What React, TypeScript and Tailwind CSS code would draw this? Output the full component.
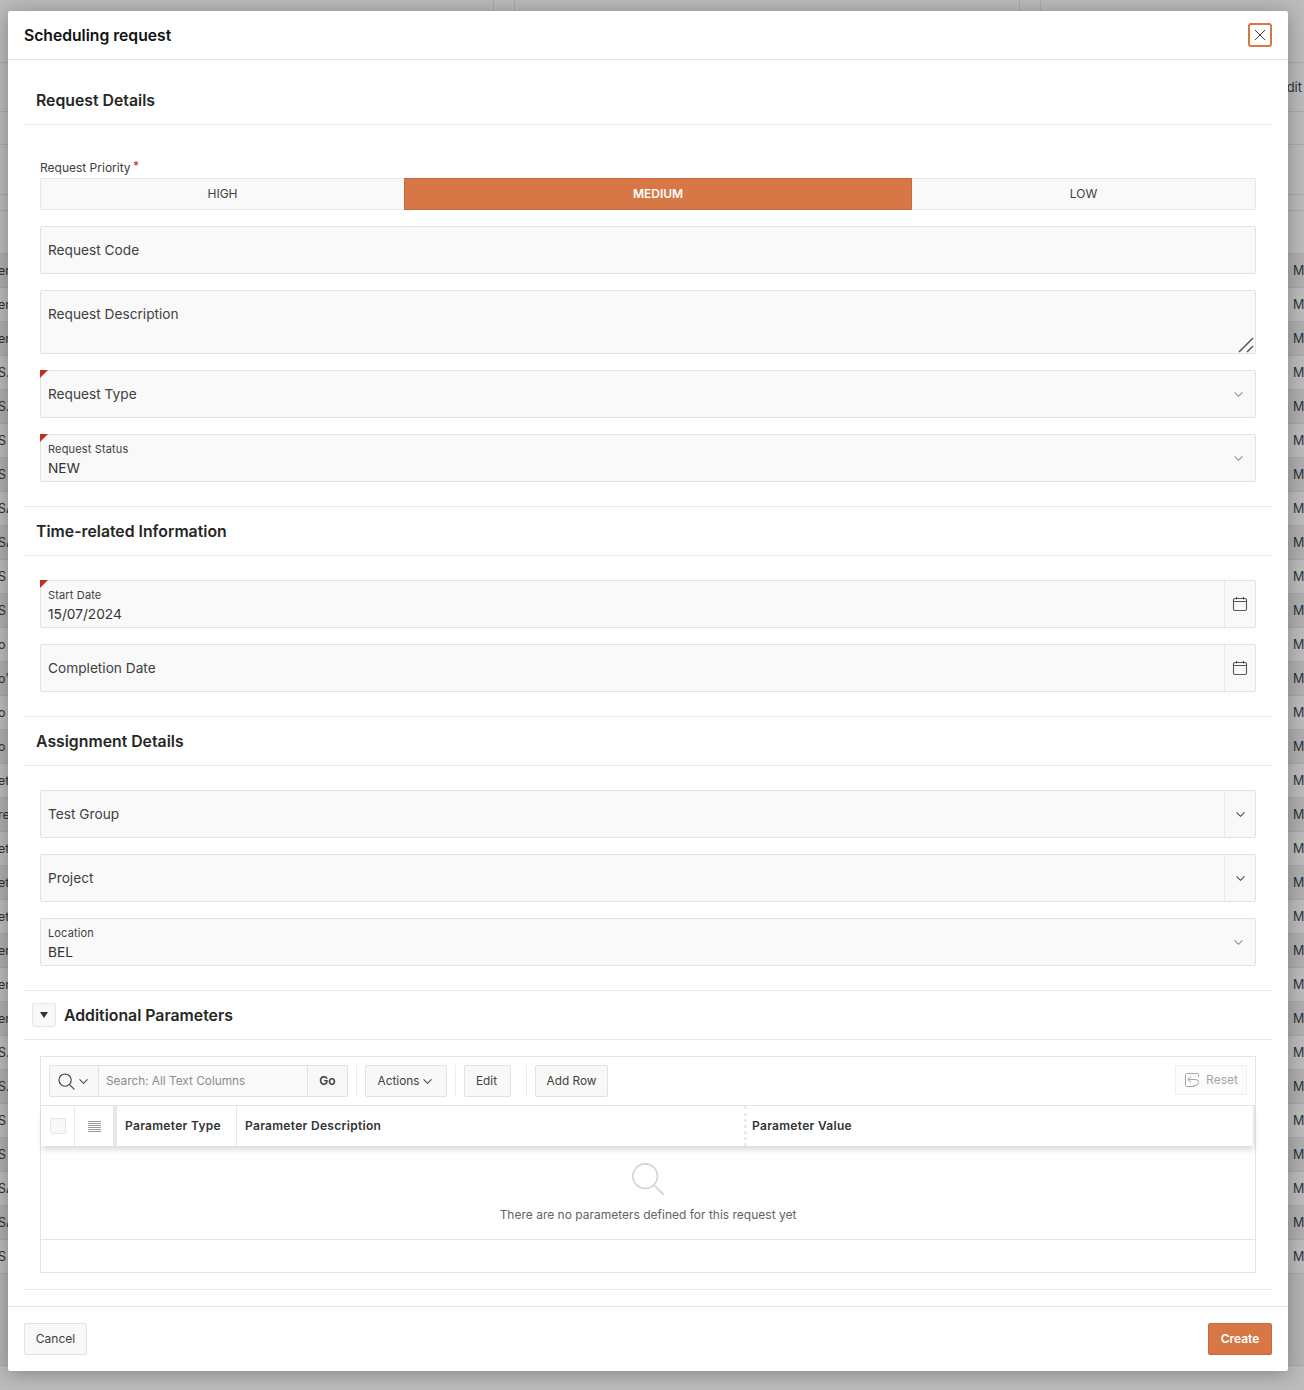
import React from 'react';

const leftCells = ['er', 'er', 'er', 'S.', 'S.', 'S', 'S', 'SA', 'SA', 'S', 'S', 'o', "o'", 'o', 'o', 'et', 're', 'et', 'et', 'et', 'er', 'er', 'er', 'S.', 'S.', 'S', 'S', 'SA', 'SA', 'S'];

const ChevronDown: React.FC<{ className?: string }> = ({ className }) => (
  <svg viewBox="0 0 12 8" fill="none" stroke="currentColor" strokeWidth="1.2" className={className}>
    <path d="M1.5 1.5 6 6l4.5-4.5" />
  </svg>
);

const CalendarIcon = () => (
  <svg viewBox="0 0 16 16" fill="none" stroke="#555555" strokeWidth="1.1" className="w-[16px] h-[16px]">
    <rect x="1.5" y="2.5" width="13" height="12" rx="1.5" />
    <path d="M1.5 5.5h13M4.5 1v2.5M11.5 1v2.5" />
  </svg>
);

const SearchIcon: React.FC<{ className?: string; strokeWidth?: number }> = ({ className, strokeWidth = 1.2 }) => (
  <svg viewBox="0 0 18 18" fill="none" stroke="currentColor" strokeWidth={strokeWidth} className={className}>
    <circle cx="7.5" cy="7.5" r="6.5" />
    <path d="m12.3 12.3 5 5" />
  </svg>
);

const RequiredMark = () => (
  <span className="absolute left-[-1px] top-[-1px] w-0 h-0 border-t-[8px] border-r-[8px] border-t-[#c52f1b] border-r-transparent" />
);

interface FieldProps {
  label: string;
  value?: string;
  required?: boolean;
  height?: string;
  trailing?: 'select' | 'calendar' | 'popup';
  resize?: boolean;
}

const Field: React.FC<FieldProps> = ({ label, value, required, height = 'h-[48px]', trailing, resize }) => (
  <div className={`relative flex ${height} bg-[#f9f9f9] border border-[#e2e2e2] rounded-[2px]`}>
    {required && <RequiredMark />}
    <div className={`flex-1 px-[7px] ${resize ? 'pt-[13px]' : value ? 'pt-[6px]' : 'flex items-center'}`}>
      {value ? (
        <>
          <div className="text-[11px] leading-[16px] tracking-[0.15px] text-[#404040]">{label}</div>
          <div className="mt-[1px] text-[13.7px] leading-[20px] text-[#333333]">{value}</div>
        </>
      ) : (
        <div className="text-[13.7px] leading-[20px] text-[#404040]">{label}</div>
      )}
    </div>
    {trailing === 'select' && (
      <div className="flex items-center pr-[11px]">
        <ChevronDown className="w-[11px] h-[7px] text-[#8c8c8c]" />
      </div>
    )}
    {trailing === 'calendar' && (
      <div className="flex items-center justify-center w-[31px] border-l border-[#e8e8e8]">
        <CalendarIcon />
      </div>
    )}
    {trailing === 'popup' && (
      <div className="flex items-center justify-center w-[31px] border-l border-[#e8e8e8]">
        <ChevronDown className="w-[11px] h-[7px] text-[#404040]" />
      </div>
    )}
    {resize && (
      <svg viewBox="0 0 16 16" stroke="#555555" strokeWidth="1.5" className="absolute right-[1px] bottom-0 w-[16px] h-[16px]">
        <path d="M1 15 15 1M9 15l6-6" />
      </svg>
    )}
  </div>
);

const SectionHeader: React.FC<{ title: string; children?: React.ReactNode }> = ({ title, children }) => (
  <div className="flex items-center h-[49px] border-b border-[#e8e8e8] pl-[8px]">
    {children}
    <h2 className={`pt-[2px] text-[15.8px] leading-[24px] font-semibold text-[#262626] ${children ? '' : 'pl-[4px]'}`}>{title}</h2>
  </div>
);

const ToolbarButton: React.FC<{ children: React.ReactNode; className?: string }> = ({ children, className = '' }) => (
  <button
    type="button"
    className={`flex items-center justify-center h-[32px] pt-[1px] bg-[#f8f8f8] border border-[#e2e2e2] rounded-[2px] text-[11.8px] text-[#404040] ${className}`}
  >
    {children}
  </button>
);

const ToolbarDivider = () => <div className="w-px h-[32px] bg-[#ededed]" />;

const ParametersGrid = () => (
  <div className="border border-[#e4e4e4]">
    <div className="flex items-center h-[49px] pl-[8px] pr-[8px] border-b border-[#e4e4e4]">
      <div className="flex h-[32px] w-[299px] bg-[#f8f8f8] border border-[#e2e2e2] rounded-[2px]">
        <div className="flex items-center gap-[3px] w-[49px] pl-[8px] border-r border-[#e2e2e2] text-[#404040]">
          <SearchIcon className="w-[17px] h-[17px]" />
          <ChevronDown className="w-[11px] h-[7px]" />
        </div>
        <div className="flex-1 flex items-center px-[7px] pt-[1px] bg-[#fafafa] text-[11.8px] text-[#8c8c8c]">Search: All Text Columns</div>
        <div className="flex items-center justify-center w-[40px] border-l border-[#e2e2e2] text-[12px] font-semibold text-[#404040]">Go</div>
      </div>
      <div className="ml-[8px] mr-[8px]"><ToolbarDivider /></div>
      <ToolbarButton className="w-[82px] gap-[3px] pr-[1px]">
        Actions
        <ChevronDown className="w-[11px] h-[7px]" />
      </ToolbarButton>
      <div className="ml-[8px] mr-[8px]"><ToolbarDivider /></div>
      <ToolbarButton className="w-[47px] pr-[2px]">Edit</ToolbarButton>
      <div className="ml-[15px] mr-[8px]"><ToolbarDivider /></div>
      <ToolbarButton className="w-[73px]">Add Row</ToolbarButton>
      <div className="ml-auto flex items-center justify-center gap-[6px] w-[72px] h-[30px] mt-[-2px] bg-[#fcfcfc] border border-[#f0f0f0] rounded-[2px] text-[12px] text-[#a6a6a6]">
        <svg viewBox="0 0 16 16" fill="none" stroke="#a6a6a6" strokeWidth="1" className="w-[16px] h-[16px]">
          <path d="M14.5 5V2.5a1 1 0 0 0-1-1h-11a1 1 0 0 0-1 1v11a1 1 0 0 0 1 1h8" />
          <path d="M7 4.5 3.8 7.5 7 10.5M4 7.5h7.5a2.8 2.8 0 0 1 0 6H9.5" />
        </svg>
        Reset
      </div>
    </div>
    <div className="flex h-[40px] border-r-2 border-[#e8e8e8] shadow-[0_5px_6px_-1px_rgba(0,0,0,0.14)] relative text-[12px] font-semibold tracking-[0.3px] text-[#333333]">
      <div className="flex items-center justify-center w-[34px] border-r border-[#e8e8e8]">
        <div className="w-[16px] h-[16px] bg-[#f8f8f8] border border-[#e6e6e6] rounded-[2px]" />
      </div>
      <div className="flex items-center justify-center w-[42px] border-r-4 border-[#e8e8e8]">
        <svg viewBox="0 0 13 11" stroke="#999999" strokeWidth="1" className="w-[13px] h-[11px]">
          <path d="M0 .5h13M0 2.5h13M0 4.5h13M0 6.5h13M0 8.5h13M0 10.5h13" />
        </svg>
      </div>
      <div className="flex items-center w-[120px] px-[8px] border-r border-[#e8e8e8]">Parameter Type</div>
      <div className="flex items-center w-[510px] px-[8px] border-r-[3px] border-dotted border-[#ececec]">Parameter Description</div>
      <div className="flex items-center flex-1 px-[5px]">Parameter Value</div>
    </div>
    <div className="flex flex-col items-center h-[94px] border-b border-[#e4e4e4] pt-[16px]">
      <SearchIcon className="w-[34px] h-[34px] text-[#d2d2d2]" strokeWidth={0.85} />
      <p className="mt-[11px] text-[12px] leading-[16px] text-[#636363]">There are no parameters defined for this request yet</p>
    </div>
    <div className="h-[32px]" />
  </div>
);

export default function App() {
  return (
    <div className="relative w-[1304px] h-[1390px] overflow-hidden bg-[#bcbcbc] text-[14px] text-[#2e2e2e]" style={{ fontFamily: 'Inter, "Noto Sans", sans-serif' }}>
      {/* page behind the dialog */}
      <div className="flex h-[14px]">
        <div className="w-[494px] border-r border-[#aaaaaa]" />
        <div className="w-[21px] border-r border-[#aaaaaa]" />
        <div className="w-[505px] border-r border-[#aaaaaa]" />
        <div className="w-[21px] border-r border-[#aaaaaa]" />
      </div>
      <div className="h-[49px] border-b border-[#acacac]" />
      <div className="flex items-center justify-end h-[49px] pt-[2px] pr-[2px] border-b border-[#acacac] text-[13px] text-[#333333]">Edit</div>
      <div className="h-[33px] border-b border-[#acacac]" />
      <div className="h-[50px] border-b border-[#acacac]" />
      <div className="h-[16px] border-b border-[#acacac]" />
      <div className="h-[43px] border-b border-[#acacac]" />
      {leftCells.map((cell, i) => (
        <div
          key={i}
          className={`flex items-center justify-between h-[34px] pt-[2px] border-b border-[#a8a8a8] text-[12.5px] text-[#333333] ${i % 2 === 0 ? 'bg-[#b0b0b0]' : 'bg-[#bcbcbc]'}`}
        >
          <div className="ml-[-2px] whitespace-nowrap">{cell}</div>
          <div className="w-[11px]">M</div>
        </div>
      ))}
      <div className="h-[92px] border-b border-[#a8a8a8] bg-[#b4b4b4]" />

      {/* dialog */}
      <div className="absolute left-[8px] top-[11px] flex flex-col w-[1280px] h-[1360px] bg-white rounded-[2px] shadow-[0_2px_20px_rgba(0,0,0,0.3)]">
        <div className="flex items-center justify-between h-[49px] pl-[16px] pr-[16px] border-b border-[#e4e4e4]">
          <h1 className="pt-[2px] text-[15.7px] leading-[24px] font-semibold text-[#111111]">Scheduling request</h1>
          <button type="button" className="flex items-center justify-center w-[24px] h-[24px] bg-white border-2 border-[#d67745] rounded-[3px]">
            <svg viewBox="0 0 12 12" stroke="#404040" strokeWidth="1" className="w-[12px] h-[12px]">
              <path d="M1 1l10 10M11 1 1 11" />
            </svg>
          </button>
        </div>

        <div className="flex-1 px-[16px] pt-[16px]">
          <section className="border-b border-[#e8e8e8]">
            <SectionHeader title="Request Details" />
            <div className="flex flex-col gap-[16px] px-[16px] pt-[35px] pb-[24px]">
              <div>
                <div className="relative h-[18px] text-[12px] leading-[16px] text-[#404040]">
                  Request Priority
                  <span className="absolute left-[93px] top-[-2px] text-[#c52f1b]">*</span>
                </div>
                <div className="flex h-[32px] bg-[#f9f9f9] border border-[#e6e6e6] rounded-[2px] text-[12px] text-[#404040]">
                  <div className="flex items-center justify-center w-[363px]">HIGH</div>
                  <div className="flex items-center justify-center w-[508px] my-[-1px] bg-[#d67745] border border-[#c9693a] font-semibold text-white">MEDIUM</div>
                  <div className="flex items-center justify-center flex-1">LOW</div>
                </div>
              </div>
              <Field label="Request Code" />
              <Field label="Request Description" height="h-[64px]" resize />
              <Field label="Request Type" required trailing="select" />
              <Field label="Request Status" value="NEW" required trailing="select" />
            </div>
          </section>

          <section className="border-b border-[#e8e8e8]">
            <SectionHeader title="Time-related Information" />
            <div className="flex flex-col gap-[16px] px-[16px] pt-[24px] pb-[24px]">
              <Field label="Start Date" value="15/07/2024" required trailing="calendar" />
              <Field label="Completion Date" trailing="calendar" />
            </div>
          </section>

          <section className="border-b border-[#e8e8e8]">
            <SectionHeader title="Assignment Details" />
            <div className="flex flex-col gap-[16px] px-[16px] pt-[24px] pb-[24px]">
              <Field label="Test Group" trailing="popup" />
              <Field label="Project" trailing="popup" />
              <Field label="Location" value="BEL" trailing="select" />
            </div>
          </section>

          <section className="border-b border-[#e8e8e8]">
            <SectionHeader title="Additional Parameters">
              <button type="button" className="flex items-center justify-center w-[24px] h-[24px] mr-[8px] bg-[#f8f8f8] border border-[#e6e6e6] rounded-[2px]">
                <span className="w-0 h-0 border-l-[4.5px] border-r-[4.5px] border-t-[6px] border-l-transparent border-r-transparent border-t-[#333333]" />
              </button>
            </SectionHeader>
            <div className="px-[16px] pt-[16px] pb-[16px]">
              <ParametersGrid />
            </div>
          </section>
        </div>

        <div className="flex items-center justify-between h-[65px] px-[16px] border-t border-[#e4e4e4]">
          <button type="button" className="w-[63px] h-[32px] bg-[#f8f8f8] border border-[#e2e2e2] rounded-[2px] text-[12px] text-[#404040]">Cancel</button>
          <button type="button" className="w-[64px] h-[32px] bg-[#d67745] border border-[#c9693a] rounded-[2px] text-[12px] font-semibold text-white">Create</button>
        </div>
      </div>
    </div>
  );
}
